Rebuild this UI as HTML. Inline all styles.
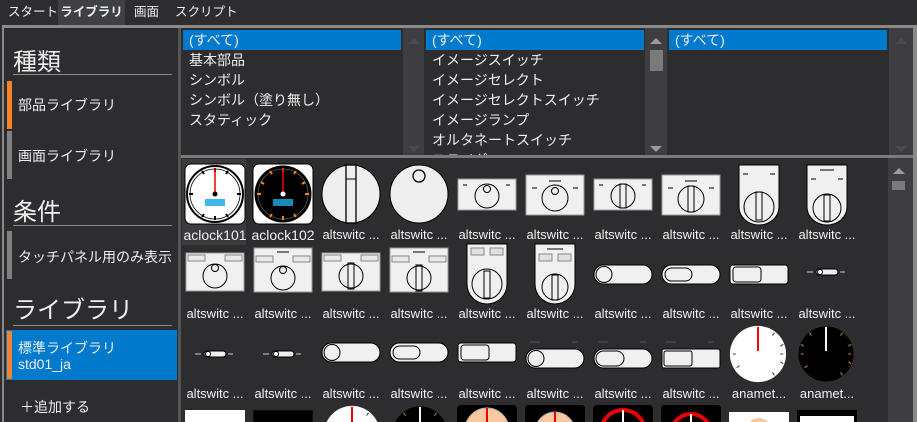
<!DOCTYPE html>
<html><head><meta charset="utf-8"><style>
*{margin:0;padding:0;box-sizing:border-box}
html{overflow:hidden;width:917px;height:422px}
body{width:917px;height:422px;overflow:hidden;background:#2d2d30;font-family:"Liberation Sans","Noto Sans CJK JP",sans-serif;color:#f0f0f0;position:relative}
.a{position:absolute;white-space:nowrap}
.tab{top:0;height:25px;line-height:24px;font-size:12.5px}
.li{font-size:14px;line-height:20px;height:20px;padding-left:6px}
.sel{background:#007acc}
.sb{background:#3e3e42}
.lab{font-size:13px;width:68px;text-align:center;color:#f2f2f2}
.h{font-size:24px}
.t{font-size:14px}
</style></head><body>
<div class="a" style="left:0;top:0;width:917px;height:25px;background:#2d2d30"></div>
<div class="a tab" style="left:8px">スタート</div>
<div class="a tab" style="left:58px;width:67px;background:#3f3f46;font-weight:bold;text-align:center">ライブラリ</div>
<div class="a tab" style="left:134px">画面</div>
<div class="a tab" style="left:175px">スクリプト</div>
<div class="a" style="left:2px;top:25px;width:915px;height:3px;background:#8a8a8a"></div>
<div class="a" style="left:2px;top:25px;width:2px;height:397px;background:#8a8a8a"></div>
<div class="a" style="left:913px;top:25px;width:4px;height:397px;background:#8a8a8a"></div>
<div class="a" style="left:178px;top:28px;width:3px;height:394px;background:#555"></div>
<div class="a" style="left:181px;top:155px;width:732px;height:3px;background:#7a7a7a"></div>

<div class="a h" style="left:13px;top:42px">種類</div>
<div class="a" style="left:13px;top:74px;width:159px;height:1px;background:#8a8a8a"></div>
<div class="a" style="left:7px;top:81px;width:5px;height:48px;background:#f5822a"></div>
<div class="a t" style="left:18px;top:95px">部品ライブラリ</div>
<div class="a" style="left:7px;top:131px;width:5px;height:48px;background:#808080"></div>
<div class="a t" style="left:18px;top:146px">画面ライブラリ</div>
<div class="a h" style="left:13px;top:192px">条件</div>
<div class="a" style="left:13px;top:225px;width:159px;height:1px;background:#8a8a8a"></div>
<div class="a" style="left:7px;top:231px;width:5px;height:48px;background:#808080"></div>
<div class="a t" style="left:18px;top:247px">タッチパネル用のみ表示</div>
<div class="a h" style="left:13px;top:290px">ライブラリ</div>
<div class="a" style="left:13px;top:325px;width:159px;height:1px;background:#8a8a8a"></div>
<div class="a" style="left:6px;top:330px;width:171px;height:50px;background:#007acc"></div>
<div class="a" style="left:7px;top:331px;width:5px;height:48px;background:#f5822a"></div>
<div class="a t" style="left:18px;top:338px">標準ライブラリ</div>
<div class="a t" style="left:18px;top:356px">std01_ja</div>
<div class="a t" style="left:20px;top:397px">＋追加する</div>

<div class="a li sel" style="left:183px;top:30px;width:218px">(すべて)</div>
<div class="a li" style="left:183px;top:50px">基本部品</div>
<div class="a li" style="left:183px;top:70px">シンボル</div>
<div class="a li" style="left:183px;top:90px">シンボル（塗り無し）</div>
<div class="a li" style="left:183px;top:110px">スタティック</div>
<div class="a sb" style="left:403px;top:28px;width:21px;height:127px"></div>
<div class="a" style="left:408px;top:38px;border:6px solid transparent;border-bottom:6px solid #4a4a4f;border-top:0"></div>
<div class="a" style="left:408px;top:146px;border:6px solid transparent;border-top:6px solid #4a4a4f;border-bottom:0"></div>

<div class="a" style="left:424px;top:28px;width:221px;height:127px;overflow:hidden">
<div class="a li sel" style="left:2px;top:2px;width:218px">(すべて)</div>
<div class="a li" style="left:2px;top:22px">イメージスイッチ</div>
<div class="a li" style="left:2px;top:42px">イメージセレクト</div>
<div class="a li" style="left:2px;top:62px">イメージセレクトスイッチ</div>
<div class="a li" style="left:2px;top:82px">イメージランプ</div>
<div class="a li" style="left:2px;top:102px">オルタネートスイッチ</div>
<div class="a li" style="left:2px;top:122px">スライダ</div>
</div>
<div class="a sb" style="left:645px;top:28px;width:22px;height:127px"></div>
<div class="a" style="left:650px;top:38px;border:6px solid transparent;border-bottom:6px solid #9a9a9a;border-top:0"></div>
<div class="a" style="left:650px;top:50px;width:13px;height:21px;background:#7a7a7a"></div>
<div class="a" style="left:650px;top:146px;border:6px solid transparent;border-top:6px solid #9a9a9a;border-bottom:0"></div>

<div class="a li sel" style="left:669px;top:30px;width:218px">(すべて)</div>
<div class="a sb" style="left:889px;top:28px;width:24px;height:127px"></div>
<div class="a" style="left:895px;top:38px;border:6px solid transparent;border-bottom:6px solid #4a4a4f;border-top:0"></div>
<div class="a" style="left:895px;top:146px;border:6px solid transparent;border-top:6px solid #4a4a4f;border-bottom:0"></div>

<div class="a sb" style="left:888px;top:158px;width:25px;height:264px"></div>
<div class="a" style="left:893px;top:168px;border:6px solid transparent;border-bottom:6px solid #9a9a9a;border-top:0"></div>
<div class="a" style="left:892px;top:181px;width:13px;height:9px;background:#7a7a7a"></div>

<div class="a" style="left:182px;top:159px;width:64px;height:86px;background:#3a3a3f"></div>

<svg class="a" style="left:0;top:0" width="917" height="422" viewBox="0 0 917 422">
<defs>
<clipPath id="cp"><rect x="181" y="158" width="707" height="264"/></clipPath>
<symbol id="clkW" viewBox="0 0 64 64"><rect x="2" y="2" width="60" height="60" rx="6" fill="#fff" stroke="#000"/><circle cx="32" cy="32" r="28" fill="none" stroke="#000" stroke-width="2"/><circle cx="32" cy="32" r="25" fill="none" stroke="#000" stroke-width=".8"/><g stroke="#000" stroke-width="2"><path d="M32 6v4M32 54v4M6 32h4M54 32h4M45 9l-2 3M19 9l2 3M45 55l-2-3M19 55l2-3"/></g><rect x="22" y="37" width="20" height="7" fill="#3cb9ea"/><path d="M32 32V6" stroke="#e00" stroke-width="1.5"/><circle cx="32" cy="32" r="2.5" fill="#000"/></symbol>
<symbol id="clkB" viewBox="0 0 64 64"><rect x="2" y="2" width="60" height="60" rx="6" fill="#fff" stroke="#000"/><circle cx="32" cy="32" r="28.5" fill="#000"/><circle cx="32" cy="32" r="25" fill="none" stroke="#555" stroke-width=".8"/><g stroke="#f08a10" stroke-width="2"><path d="M32 6v4M32 54v4M6 32h4M54 32h4M45 9l-2 3M19 9l2 3M45 55l-2-3M19 55l2-3M10 20l3 2M54 20l-3 2"/></g><rect x="22" y="37" width="20" height="7" fill="#1a8ab8"/><path d="M32 32V6" stroke="#e00" stroke-width="1.5"/><circle cx="32" cy="32" r="2.5" fill="#fff"/></symbol>
<symbol id="kbar" viewBox="0 0 64 64"><circle cx="32" cy="32" r="29" fill="#eee" stroke="#000"/><rect x="27" y="3" width="10" height="58" fill="#eee" stroke="#000" stroke-width="1.3"/><path d="M27 17h10" stroke="#000"/></symbol>
<symbol id="kdot" viewBox="0 0 64 64"><circle cx="32" cy="32" r="29" fill="#eee" stroke="#000"/><circle cx="32" cy="14" r="6" fill="none" stroke="#000" stroke-width="1.3"/></symbol>
<symbol id="pE" viewBox="0 0 64 64"><rect x="3" y="17" width="58" height="31" fill="#f0f0f0" stroke="#999"/><circle cx="32" cy="34" r="12" fill="none" stroke="#000"/><circle cx="32" cy="27" r="3.5" fill="none" stroke="#000"/><path d="M8 23h4M51 23h4" stroke="#000"/></symbol>
<symbol id="pF" viewBox="0 0 64 64"><rect x="3" y="13" width="58" height="40" fill="#f0f0f0" stroke="#999"/><path d="M26 19h12M9 26h5M50 26h5" stroke="#000"/><circle cx="32" cy="36" r="13" fill="none" stroke="#000"/><circle cx="32" cy="29" r="3.5" fill="none" stroke="#000"/></symbol>
<symbol id="pG" viewBox="0 0 64 64"><rect x="3" y="17" width="58" height="31" fill="#f0f0f0" stroke="#999"/><circle cx="32" cy="34" r="12" fill="none" stroke="#000"/><rect x="29" y="22" width="6" height="24" fill="none" stroke="#000"/><path d="M8 23h4M51 23h4" stroke="#000"/></symbol>
<symbol id="pH" viewBox="0 0 64 64"><rect x="3" y="13" width="58" height="40" fill="#f0f0f0" stroke="#999"/><path d="M26 19h12M9 26h5M50 26h5" stroke="#000"/><circle cx="32" cy="37" r="13" fill="none" stroke="#000"/><rect x="29" y="24" width="6" height="26" fill="none" stroke="#000"/></symbol>
<symbol id="sI" viewBox="0 0 64 64"><path d="M12 3h40v42a20 18 0 0 1-40 0z" fill="#f0f0f0" stroke="#000"/><circle cx="32" cy="45" r="15" fill="none" stroke="#000"/><rect x="29" y="30" width="6" height="28" fill="none" stroke="#000"/><path d="M16 12h5M43 12h5" stroke="#000"/></symbol>
<symbol id="sJ" viewBox="0 0 64 64"><path d="M12 3h40v42a20 18 0 0 1-40 0z" fill="#f0f0f0" stroke="#000"/><circle cx="32" cy="46" r="14" fill="none" stroke="#000"/><rect x="29" y="33" width="6" height="26" fill="none" stroke="#000"/><path d="M25 8h14M16 17h5M43 17h5" stroke="#000"/></symbol>
<symbol id="bK" viewBox="0 0 64 64"><rect x="3" y="11" width="58" height="38" fill="#f0f0f0" stroke="#999"/><rect x="5" y="13" width="17" height="6" fill="#e8e8e8" stroke="#888"/><rect x="42" y="13" width="17" height="6" fill="#e8e8e8" stroke="#888"/><circle cx="32" cy="34" r="12" fill="none" stroke="#000"/><circle cx="32" cy="26" r="3.5" fill="none" stroke="#000"/></symbol>
<symbol id="bL" viewBox="0 0 64 64"><rect x="3" y="6" width="58" height="44" fill="#f0f0f0" stroke="#999"/><path d="M26 10h12" stroke="#000"/><rect x="5" y="14" width="17" height="6" fill="#e8e8e8" stroke="#888"/><rect x="42" y="14" width="17" height="6" fill="#e8e8e8" stroke="#888"/><circle cx="32" cy="36" r="12" fill="none" stroke="#000"/><circle cx="32" cy="28" r="3.5" fill="none" stroke="#000"/></symbol>
<symbol id="bM" viewBox="0 0 64 64"><rect x="3" y="11" width="58" height="38" fill="#f0f0f0" stroke="#999"/><rect x="5" y="13" width="17" height="6" fill="#e8e8e8" stroke="#888"/><rect x="42" y="13" width="17" height="6" fill="#e8e8e8" stroke="#888"/><circle cx="32" cy="34" r="12" fill="none" stroke="#000"/><rect x="29" y="21" width="6" height="26" fill="none" stroke="#000"/></symbol>
<symbol id="bN" viewBox="0 0 64 64"><rect x="3" y="6" width="58" height="44" fill="#f0f0f0" stroke="#999"/><path d="M26 10h12" stroke="#000"/><rect x="5" y="14" width="17" height="6" fill="#e8e8e8" stroke="#888"/><rect x="42" y="14" width="17" height="6" fill="#e8e8e8" stroke="#888"/><circle cx="32" cy="36" r="12" fill="none" stroke="#000"/><rect x="29" y="23" width="6" height="26" fill="none" stroke="#000"/></symbol>
<symbol id="sO" viewBox="0 0 64 64"><path d="M12 2h40v40a20 20 0 0 1-40 0z" fill="#f0f0f0" stroke="#000"/><rect x="16" y="6" width="13" height="7" fill="#e0e0e0" stroke="#888"/><rect x="35" y="6" width="13" height="7" fill="#e0e0e0" stroke="#888"/><circle cx="32" cy="42" r="15" fill="none" stroke="#000"/><rect x="29" y="29" width="6" height="27" fill="none" stroke="#000"/></symbol>
<symbol id="sP" viewBox="0 0 64 64"><path d="M12 2h40v40a20 20 0 0 1-40 0z" fill="#f0f0f0" stroke="#000"/><path d="M24 7h16" stroke="#000"/><rect x="16" y="12" width="13" height="7" fill="#e0e0e0" stroke="#888"/><rect x="35" y="12" width="13" height="7" fill="#e0e0e0" stroke="#888"/><circle cx="32" cy="45" r="13" fill="none" stroke="#000"/><rect x="29" y="33" width="6" height="25" fill="none" stroke="#000"/></symbol>
<symbol id="pc" viewBox="0 0 64 64"><rect x="3" y="23" width="58" height="19" rx="9.5" fill="#f0f0f0" stroke="#000"/><circle cx="13" cy="32.5" r="8" fill="none" stroke="#000"/></symbol>
<symbol id="po" viewBox="0 0 64 64"><rect x="3" y="23" width="58" height="19" rx="9.5" fill="#f0f0f0" stroke="#000"/><rect x="6" y="26" width="27" height="13" rx="6.5" fill="none" stroke="#000"/></symbol>
<symbol id="pr" viewBox="0 0 64 64"><rect x="3" y="23" width="58" height="19" rx="3" fill="#f0f0f0" stroke="#000"/><rect x="6" y="25" width="28" height="15" rx="3" fill="none" stroke="#000"/></symbol>
<symbol id="tiny" viewBox="0 0 64 64"><path d="M12 32h6M45 32h5" stroke="#ccc"/><rect x="21" y="29" width="22" height="6" rx="3" fill="#f0f0f0" stroke="#000"/><circle cx="25" cy="32" r="2.5" fill="#fff" stroke="#000"/></symbol>
<symbol id="opc" viewBox="0 0 64 64"><rect x="3" y="29" width="58" height="19" rx="9.5" fill="#f0f0f0" stroke="#000"/><circle cx="13" cy="38.5" r="8" fill="none" stroke="#000"/><path d="M7 22h10M49 22h6" stroke="#555"/></symbol>
<symbol id="opo" viewBox="0 0 64 64"><rect x="3" y="29" width="58" height="19" rx="9.5" fill="#f0f0f0" stroke="#000"/><rect x="5" y="31" width="28" height="15" rx="7.5" fill="none" stroke="#000"/><path d="M7 22h10M49 22h6" stroke="#555"/></symbol>
<symbol id="opr" viewBox="0 0 64 64"><rect x="3" y="29" width="58" height="19" rx="2" fill="#f0f0f0" stroke="#000"/><rect x="5" y="31" width="28" height="15" rx="2" fill="none" stroke="#000"/><path d="M7 22h10M49 22h6" stroke="#555"/></symbol>
<symbol id="gW" viewBox="0 0 64 64"><circle cx="32" cy="32" r="29" fill="#fff"/><path d="M32 4v25" stroke="#e00" stroke-width="2"/><g stroke="#333"><path d="M49 10l-2 3M58 22l-3 2M58 42l-3-2M49 54l-2-3M6 32h3M58 32h-3M10 46l3-2"/></g></symbol>
<symbol id="gB" viewBox="0 0 64 64"><circle cx="32" cy="32" r="29" fill="#000" stroke="#333"/><path d="M32 4v25" stroke="#fff" stroke-width="2"/><g stroke="#e08a20"><path d="M49 10l-2 3M58 22l-3 2M58 42l-3-2M49 54l-2-3M6 32h3M58 32h-3M10 46l3-2M15 10l2 3M6 22l3 2"/></g></symbol>
</defs>
<g clip-path="url(#cp)">
<use href="#clkW" x="183" y="162" width="64" height="64"/>
<use href="#clkB" x="251" y="162" width="64" height="64"/>
<use href="#kbar" x="319" y="162" width="64" height="64"/>
<use href="#kdot" x="387" y="162" width="64" height="64"/>
<use href="#pE" x="455" y="162" width="64" height="64"/>
<use href="#pF" x="523" y="162" width="64" height="64"/>
<use href="#pG" x="591" y="162" width="64" height="64"/>
<use href="#pH" x="659" y="162" width="64" height="64"/>
<use href="#sI" x="727" y="162" width="64" height="64"/>
<use href="#sJ" x="795" y="162" width="64" height="64"/>

<use href="#bK" x="183" y="242" width="64" height="64"/>
<use href="#bL" x="251" y="242" width="64" height="64"/>
<use href="#bM" x="319" y="242" width="64" height="64"/>
<use href="#bN" x="387" y="242" width="64" height="64"/>
<use href="#sO" x="455" y="242" width="64" height="64"/>
<use href="#sP" x="523" y="242" width="64" height="64"/>
<use href="#pc" x="591" y="242" width="64" height="64"/>
<use href="#po" x="659" y="242" width="64" height="64"/>
<use href="#pr" x="727" y="242" width="64" height="64"/>
<use href="#tiny" x="795" y="240" width="64" height="64"/>

<use href="#tiny" x="183" y="322" width="64" height="64"/>
<use href="#tiny" x="251" y="322" width="64" height="64"/>
<use href="#pc" x="319" y="320" width="64" height="64"/>
<use href="#po" x="387" y="320" width="64" height="64"/>
<use href="#pr" x="455" y="320" width="64" height="64"/>
<use href="#opc" x="523" y="320" width="64" height="64"/>
<use href="#opo" x="591" y="320" width="64" height="64"/>
<use href="#opr" x="659" y="320" width="64" height="64"/>
<use href="#gW" x="727" y="323" width="62" height="62"/>
<use href="#gB" x="795" y="323" width="62" height="62"/>

<rect x="185" y="410" width="60" height="20" fill="#fff"/>
<rect x="253" y="410" width="60" height="20" fill="#000" stroke="#222"/>
<use href="#gW" x="321" y="403" width="62" height="62"/>
<use href="#gB" x="389" y="403" width="62" height="62"/>
<rect x="457" y="405" width="60" height="30" rx="4" fill="#000"/><circle cx="487" cy="430" r="22" fill="#f8c8a0" stroke="#aaa"/><path d="M487 430v-22" stroke="#e00" stroke-width="2"/>
<rect x="525" y="405" width="60" height="30" rx="4" fill="#000"/><circle cx="555" cy="432" r="20" fill="#f8c8a0" stroke="#aaa"/><path d="M555 432v-20" stroke="#e00" stroke-width="2"/>
<rect x="593" y="405" width="60" height="30" rx="4" fill="#000"/><circle cx="623" cy="432" r="22" fill="none" stroke="#e00" stroke-width="4"/><path d="M623 432v-22" stroke="#fff" stroke-width="2"/>
<rect x="661" y="405" width="60" height="30" rx="4" fill="#000"/><circle cx="691" cy="434" r="20" fill="none" stroke="#e00" stroke-width="4"/><path d="M691 434v-20" stroke="#fff" stroke-width="2"/>
<rect x="729" y="412" width="60" height="20" fill="#fff"/><circle cx="759" cy="430" r="12" fill="#f8c8a0"/>
<rect x="797" y="410" width="60" height="20" fill="#000"/><rect x="800" y="416" width="54" height="14" fill="#fff"/>
</g>
</svg>

<div class="a lab" style="left:181px;top:227px;font-size:14px">aclock101</div>
<div class="a lab" style="left:249px;top:227px;font-size:14px">aclock102</div>
<div class="a lab" style="left:317px;top:227px">altswitc ...</div>
<div class="a lab" style="left:385px;top:227px">altswitc ...</div>
<div class="a lab" style="left:453px;top:227px">altswitc ...</div>
<div class="a lab" style="left:521px;top:227px">altswitc ...</div>
<div class="a lab" style="left:589px;top:227px">altswitc ...</div>
<div class="a lab" style="left:657px;top:227px">altswitc ...</div>
<div class="a lab" style="left:725px;top:227px">altswitc ...</div>
<div class="a lab" style="left:793px;top:227px">altswitc ...</div>

<div class="a lab" style="left:181px;top:306px">altswitc ...</div>
<div class="a lab" style="left:249px;top:306px">altswitc ...</div>
<div class="a lab" style="left:317px;top:306px">altswitc ...</div>
<div class="a lab" style="left:385px;top:306px">altswitc ...</div>
<div class="a lab" style="left:453px;top:306px">altswitc ...</div>
<div class="a lab" style="left:521px;top:306px">altswitc ...</div>
<div class="a lab" style="left:589px;top:306px">altswitc ...</div>
<div class="a lab" style="left:657px;top:306px">altswitc ...</div>
<div class="a lab" style="left:725px;top:306px">altswitc ...</div>
<div class="a lab" style="left:793px;top:306px">altswitc ...</div>

<div class="a lab" style="left:181px;top:386px">altswitc ...</div>
<div class="a lab" style="left:249px;top:386px">altswitc ...</div>
<div class="a lab" style="left:317px;top:386px">altswitc ...</div>
<div class="a lab" style="left:385px;top:386px">altswitc ...</div>
<div class="a lab" style="left:453px;top:386px">altswitc ...</div>
<div class="a lab" style="left:521px;top:386px">altswitc ...</div>
<div class="a lab" style="left:589px;top:386px">altswitc ...</div>
<div class="a lab" style="left:657px;top:386px">altswitc ...</div>
<div class="a lab" style="left:725px;top:386px">anamet...</div>
<div class="a lab" style="left:793px;top:386px">anamet...</div>
</body></html>
